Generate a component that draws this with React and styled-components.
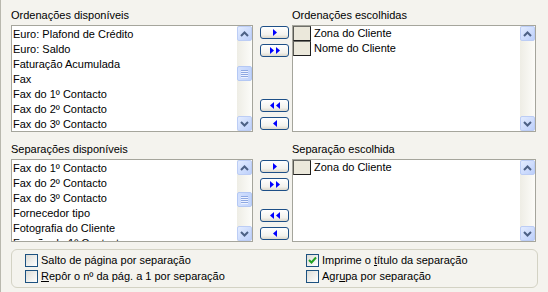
import React from "react";
import styled, { createGlobalStyle } from "styled-components";

const GlobalStyle = createGlobalStyle`
  html, body {
    margin: 0;
    padding: 0;
    background: #f4f3ee;
  }
  body {
    font-family: "Liberation Sans", Arial, sans-serif;
    font-size: 11px;
    color: #000;
  }
`;

const availableSort = [
  "Euro: Plafond de Crédito",
  "Euro: Saldo",
  "Faturação Acumulada",
  "Fax",
  "Fax do 1º Contacto",
  "Fax do 2º Contacto",
  "Fax do 3º Contacto",
];
const chosenSort = ["Zona do Cliente", "Nome do Cliente"];
const availableSplit = [
  "Fax do 1º Contacto",
  "Fax do 2º Contacto",
  "Fax do 3º Contacto",
  "Fornecedor tipo",
  "Fotografia do Cliente",
  "Função do 1º Contacto",
];
const chosenSplit = ["Zona do Cliente"];

export default function App() {
  return (
    <>
      <GlobalStyle />
      <Page>
        <Section>
          <Label>Ordenações disponíveis</Label>
          <span />
          <Label>Ordenações escolhidas</Label>
          <ListBox $height={107}>
            <Items>
              {availableSort.map((t) => (
                <Row key={t}>{t}</Row>
              ))}
            </Items>
            <ScrollBar thumb={25} />
          </ListBox>
          <Mover />
          <ListBox $height={107}>
            <Items $flush>
              {chosenSort.map((t) => (
                <ChosenRow key={t}>
                  <RowBox />
                  {t}
                </ChosenRow>
              ))}
            </Items>
            <ScrollBar />
          </ListBox>
        </Section>

        <Section>
          <Label>Separações disponíveis</Label>
          <span />
          <Label>Separação escolhida</Label>
          <ListBox $height={83}>
            <Items>
              {availableSplit.map((t) => (
                <Row key={t}>{t}</Row>
              ))}
            </Items>
            <ScrollBar thumb={17} />
          </ListBox>
          <Mover />
          <ListBox $height={83}>
            <Items $flush>
              {chosenSplit.map((t) => (
                <ChosenRow key={t}>
                  <RowBox />
                  {t}
                </ChosenRow>
              ))}
            </Items>
            <ScrollBar />
          </ListBox>
        </Section>

        <Options>
          <Check label="Salto de página por separação" />
          <Check checked label={<>Imprime o <u>t</u>ítulo da separação</>} />
          <Check label={<><u>R</u>epôr o nº da pág. a 1 por separação</>} />
          <Check label={<>Agr<u>u</u>pa por separação</>} />
        </Options>
      </Page>
    </>
  );
}

function Mover() {
  return (
    <ButtonColumn>
      <ButtonPair>
        <ArrowButton><Arrows dir="right" count={1} /></ArrowButton>
        <ArrowButton><Arrows dir="right" count={2} /></ArrowButton>
      </ButtonPair>
      <ButtonPair>
        <ArrowButton><Arrows dir="left" count={2} /></ArrowButton>
        <ArrowButton><Arrows dir="left" count={1} /></ArrowButton>
      </ButtonPair>
    </ButtonColumn>
  );
}

function Arrows({ dir, count }) {
  const w = count === 1 ? 4 : 10;
  const tri = (x) =>
    dir === "right"
      ? `${x},0 ${x + 4},3.5 ${x},7`
      : `${x + 4},0 ${x},3.5 ${x + 4},7`;
  return (
    <svg width={w} height="7" viewBox={`0 0 ${w} 7`}>
      <polygon points={tri(0)} fill="#0000ff" />
      {count === 2 && <polygon points={tri(6)} fill="#0000ff" />}
    </svg>
  );
}

function ScrollBar({ thumb }) {
  return (
    <Scroll>
      <ScrollButton>
        <svg width="9" height="6" viewBox="0 0 9 6">
          <polyline points="1,5 4.5,1.5 8,5" fill="none" stroke="#4d6185" strokeWidth="2" />
        </svg>
      </ScrollButton>
      <Track>
        {thumb !== undefined && (
          <Thumb $offset={thumb}>
            <Grip />
            <Grip />
            <Grip />
            <Grip />
          </Thumb>
        )}
      </Track>
      <ScrollButton>
        <svg width="9" height="6" viewBox="0 0 9 6">
          <polyline points="1,1 4.5,4.5 8,1" fill="none" stroke="#4d6185" strokeWidth="2" />
        </svg>
      </ScrollButton>
    </Scroll>
  );
}

function Check({ checked, label }) {
  return (
    <CheckRow>
      <Box>
        {checked && (
          <svg width="9" height="9" viewBox="0 0 9 9">
            <polyline points="1,4 3.5,6.5 8,1.5" fill="none" stroke="#21a121" strokeWidth="2" />
          </svg>
        )}
      </Box>
      <CheckText>{label}</CheckText>
    </CheckRow>
  );
}

const Page = styled.div`
  width: 547px;
  height: 292px;
  box-sizing: border-box;
  border-left: 1px solid #b9b8ae;
  padding: 9px 0 0 10px;
  overflow: hidden;
`;

const Section = styled.div`
  display: grid;
  grid-template-columns: 242px 39px 244px;
  row-gap: 3px;
  margin-bottom: 11px;

  &:nth-child(2) {
    margin-bottom: 7px;
  }
`;

const Label = styled.div`
  line-height: 13px;
  height: 13px;
  white-space: nowrap;
`;

const ListBox = styled.div`
  height: ${(p) => p.$height}px;
  box-sizing: border-box;
  border: 1px solid #a5a59c;
  background: #fff;
  display: flex;
  overflow: hidden;
`;

const Items = styled.div`
  flex: 1;
  overflow: hidden;
  padding: ${(p) => (p.$flush ? "0" : "1px 0 0 1px")};
`;

const Row = styled.div`
  height: 15px;
  line-height: 15px;
  white-space: nowrap;
`;

const ChosenRow = styled.div`
  height: 15px;
  line-height: 15px;
  display: flex;
  align-items: center;
  white-space: nowrap;
`;

const RowBox = styled.span`
  width: 18px;
  height: 15px;
  box-sizing: border-box;
  border: 1px solid;
  border-color: #6f6f6a #1e1e1e #1e1e1e #5a5a55;
  background: #ebe8db;
  margin-right: 3px;
  flex: none;
`;

const Scroll = styled.div`
  width: 15px;
  flex: none;
  display: flex;
  flex-direction: column;
  background: linear-gradient(to right, #eeede5, #fcfcf9);
`;

const ScrollButton = styled.div`
  height: 15px;
  box-sizing: border-box;
  border: 1px solid #bccdf5;
  border-radius: 2px;
  background: linear-gradient(135deg, #e3ecff, #bdd0fb);
  display: flex;
  align-items: center;
  justify-content: center;
  flex: none;
`;

const Track = styled.div`
  flex: 1;
  display: flex;
  flex-direction: column;
`;

const Thumb = styled.div`
  margin-top: ${(p) => p.$offset}px;
  height: 15px;
  box-sizing: border-box;
  border: 1px solid #b4c8f4;
  border-radius: 2px;
  background: linear-gradient(to right, #d3e0fd, #c1d4fc);
  display: flex;
  flex-direction: column;
  align-items: center;
  justify-content: center;
  gap: 1px;
`;

const Grip = styled.span`
  width: 7px;
  height: 1px;
  background: #8ea8e2;
  box-shadow: 0 1px 0 #eef3ff;
`;

const ButtonColumn = styled.div`
  display: flex;
  flex-direction: column;
  justify-content: space-between;
  padding: 1px 3px 2px 7px;
`;

const ButtonPair = styled.div`
  display: flex;
  flex-direction: column;
  gap: 5px;
`;

const ArrowButton = styled.div`
  width: 29px;
  height: 13px;
  box-sizing: border-box;
  border: 1px solid #1d4f87;
  border-radius: 3px;
  background: linear-gradient(#ffffff, #f3f2ed 70%, #dcd8cc);
  display: flex;
  align-items: center;
  justify-content: center;
`;

const Options = styled.div`
  width: 527px;
  height: 39px;
  box-sizing: border-box;
  border: 1px solid #d3d2c4;
  border-radius: 6px;
  padding: 4px 0 0 13px;
  display: grid;
  grid-template-columns: 281px 1fr;
  grid-auto-rows: 16px;
`;

const CheckRow = styled.div`
  display: flex;
  align-items: flex-start;
  white-space: nowrap;
`;

const Box = styled.span`
  width: 13px;
  height: 13px;
  box-sizing: border-box;
  border: 1px solid #1c5180;
  background: linear-gradient(135deg, #dcdcd7, #ffffff);
  display: flex;
  align-items: center;
  justify-content: center;
  flex: none;
`;

const CheckText = styled.span`
  margin-left: 3px;
  line-height: 13px;
`;
